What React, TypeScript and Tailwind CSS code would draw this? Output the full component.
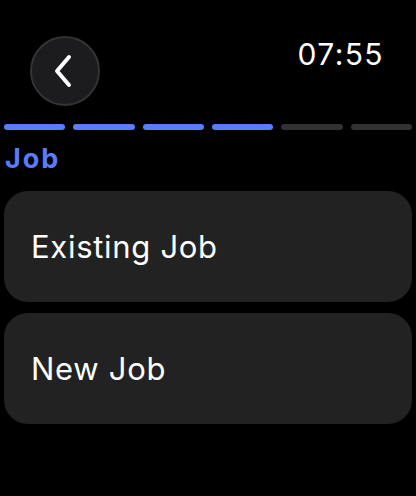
const steps = [true, true, true, true, false, false];

const options = ["Existing Job", "New Job"];

export default function App() {
  return (
    <div
      className="w-[416px] h-[496px] bg-black text-white overflow-hidden"
      style={{ fontFamily: "Inter, Roboto, 'Liberation Sans', sans-serif" }}
    >
      {/* Header */}
      <div className="flex items-start justify-between pl-[30px] pr-[32px] pt-[36px] h-[124px]">
        <button className="w-[70px] h-[70px] rounded-full bg-[#1c1c1e] border-2 border-[#333335] flex items-center justify-center">
          <svg width="24" height="34" viewBox="0 0 24 34" className="-ml-[4px]">
            <path
              d="M18 3 L6 17 L18 31"
              fill="none"
              stroke="#ffffff"
              strokeWidth="4"
              strokeLinecap="round"
              strokeLinejoin="round"
            />
          </svg>
        </button>
        <span className="text-[30px] leading-none mt-[3px] tracking-[1.4px]">07:55</span>
      </div>

      {/* Progress */}
      <div className="flex gap-[8px] px-[4px]">
        {steps.map((done, i) => (
          <div
            key={i}
            className={`flex-1 h-[6px] rounded-full ${done ? "bg-[#5a7cfa]" : "bg-[#323234]"}`}
          />
        ))}
      </div>

      <h2 className="px-[5px] mt-[15px] text-[27px] leading-[27px] font-bold tracking-[2px] text-[#5a7cfa]">
        Job
      </h2>

      {/* Options */}
      <div className="flex flex-col gap-[11px] px-[4px] mt-[19px]">
        {options.map((label) => (
          <div
            key={label}
            className="h-[111px] rounded-[24px] bg-[#222222] flex items-center px-[27px]"
          >
            <span className="text-[31px] leading-none tracking-[0.7px]">{label}</span>
          </div>
        ))}
      </div>
    </div>
  );
}
